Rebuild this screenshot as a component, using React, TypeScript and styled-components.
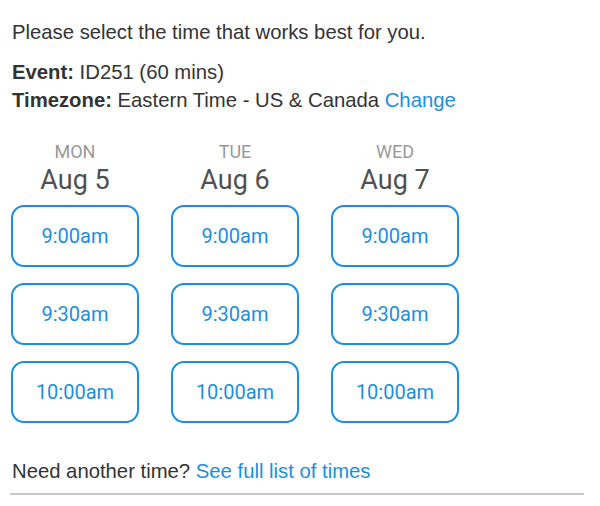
import React from 'react';
import styled, { createGlobalStyle } from 'styled-components';

const GlobalStyle = createGlobalStyle`
  body {
    margin: 0;
    background: #fff;
    font-family: "Liberation Sans", Arial, sans-serif;
    color: #333;
  }
`;

const Page = styled.div`
  width: 600px;
  padding: 18px 16px 0 11px;
  box-sizing: border-box;
`;

const Intro = styled.p`
  margin: 0 0 12px 1px;
  font-size: 20.3px;
  line-height: 28px;
`;

const Detail = styled.p`
  margin: 0 0 0 1px;
  font-size: 20.3px;
  line-height: 28px;
  & b {
    font-weight: bold;
  }
`;

const Link = styled.a`
  color: #1a8fe0;
  text-decoration: none;
  cursor: pointer;
`;

const Days = styled.div`
  display: flex;
  gap: 32px;
  margin-top: 28px;
`;

const DayColumn = styled.div`
  width: 128px;
  display: flex;
  flex-direction: column;
  align-items: center;
`;

const Weekday = styled.div`
  font-family: Roboto, sans-serif;
  font-size: 18px;
  line-height: 20px;
  color: #999;
  text-transform: uppercase;
`;

const DateLabel = styled.div`
  font-family: Roboto, sans-serif;
  font-size: 27px;
  line-height: 36px;
  color: #505050;
  margin-bottom: 7px;
`;

const Slots = styled.div`
  display: flex;
  flex-direction: column;
  gap: 16px;
  width: 100%;
`;

const SlotButton = styled.button`
  box-sizing: border-box;
  width: 128px;
  height: 62px;
  border: 2px solid #1a8fe0;
  border-radius: 13px;
  background: #fff;
  color: #1a8fe0;
  font-family: Roboto, sans-serif;
  font-size: 20px;
  cursor: pointer;
  padding: 0;
`;

const Footer = styled.div`
  margin-top: 36px;
  margin-left: -1px;
  font-size: 20.3px;
  line-height: 24px;
  padding-left: 2px;
  padding-bottom: 10px;
  border-bottom: 2px solid #c8c8c8;
  width: 572px;
`;

const days = [
  { weekday: 'Mon', date: 'Aug 5' },
  { weekday: 'Tue', date: 'Aug 6' },
  { weekday: 'Wed', date: 'Aug 7' },
];

const times = ['9:00am', '9:30am', '10:00am'];

export default function App() {
  return (
    <>
      <GlobalStyle />
      <Page>
        <Intro>Please select the time that works best for you.</Intro>
        <Detail>
          <b>Event:</b> ID251 (60 mins)
        </Detail>
        <Detail>
          <b>Timezone:</b> Eastern Time - US &amp; Canada <Link>Change</Link>
        </Detail>
        <Days>
          {days.map((day) => (
            <DayColumn key={day.date}>
              <Weekday>{day.weekday}</Weekday>
              <DateLabel>{day.date}</DateLabel>
              <Slots>
                {times.map((t) => (
                  <SlotButton key={t}>{t}</SlotButton>
                ))}
              </Slots>
            </DayColumn>
          ))}
        </Days>
        <Footer>
          Need another time? <Link>See full list of times</Link>
        </Footer>
      </Page>
    </>
  );
}
